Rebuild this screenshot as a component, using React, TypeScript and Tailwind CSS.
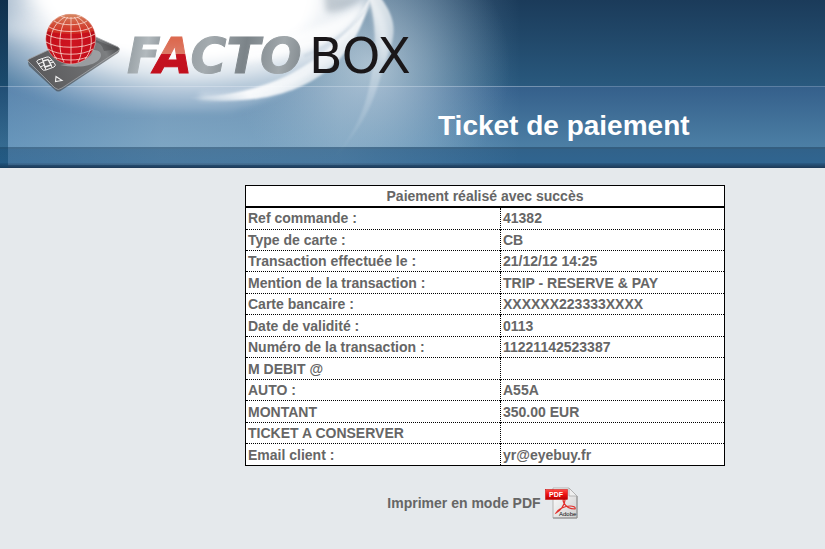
interface TicketRow {
  label: string;
  value: string;
}

const ticketRows: TicketRow[] = [
  { label: 'Ref commande :', value: '41382' },
  { label: 'Type de carte :', value: 'CB' },
  { label: 'Transaction effectuée le :', value: '21/12/12 14:25' },
  { label: 'Mention de la transaction :', value: 'TRIP - RESERVE & PAY' },
  { label: 'Carte bancaire :', value: 'XXXXXX223333XXXX' },
  { label: 'Date de validité :', value: '0113' },
  { label: 'Numéro de la transaction :', value: '11221142523387' },
  { label: 'M DEBIT @', value: '' },
  { label: 'AUTO :', value: 'A55A' },
  { label: 'MONTANT', value: '350.00 EUR' },
  { label: 'TICKET A CONSERVER', value: '' },
  { label: 'Email client :', value: 'yr@eyebuy.fr' }
];

function HeaderGlow() {
  return (
    <svg className="absolute top-0 left-0" width="560" height="168" viewBox="0 0 560 168" aria-hidden="true">
      <defs>
        <linearGradient id="veil" x1="8" x2="520" y1="0" y2="0" gradientUnits="userSpaceOnUse">
          <stop offset="0" stopColor="#86b0d4" stopOpacity="0.48" />
          <stop offset="0.3" stopColor="#a6c5dc" stopOpacity="0.55" />
          <stop offset="0.65" stopColor="#a6c5dc" stopOpacity="0.5" />
          <stop offset="0.82" stopColor="#a3c6e2" stopOpacity="0.28" />
          <stop offset="1" stopColor="#a3c6e2" stopOpacity="0" />
        </linearGradient>
        <radialGradient id="sky" gradientUnits="userSpaceOnUse" cx="0" cy="0" r="1" gradientTransform="translate(190 0) scale(260 122)">
          <stop offset="0" stopColor="#fff" />
          <stop offset="0.45" stopColor="#fff" />
          <stop offset="0.62" stopColor="#f6f8fb" stopOpacity="0.82" />
          <stop offset="0.82" stopColor="#dbe4ef" stopOpacity="0.42" />
          <stop offset="1" stopColor="#b5c9df" stopOpacity="0" />
        </radialGradient>
        <radialGradient id="halo" cx="372" cy="66" r="138" gradientUnits="userSpaceOnUse">
          <stop offset="0" stopColor="#e4edf3" stopOpacity="0.6" />
          <stop offset="0.4" stopColor="#c5d6e1" stopOpacity="0.4" />
          <stop offset="1" stopColor="#9fbdd0" stopOpacity="0" />
        </radialGradient>
        <linearGradient id="arc" x1="190" x2="385" y1="100" y2="0" gradientUnits="userSpaceOnUse">
          <stop offset="0" stopColor="#fff" stopOpacity="0" />
          <stop offset="0.25" stopColor="#fff" stopOpacity="0.9" />
          <stop offset="0.6" stopColor="#fff" stopOpacity="0.65" />
          <stop offset="1" stopColor="#fff" />
        </linearGradient>
        <linearGradient id="tail" x1="0" x2="0" y1="0" y2="158" gradientUnits="userSpaceOnUse">
          <stop offset="0" stopColor="#fff" stopOpacity="0.75" />
          <stop offset="0.35" stopColor="#eef4f8" stopOpacity="0.45" />
          <stop offset="0.7" stopColor="#eef4f8" stopOpacity="0.2" />
          <stop offset="1" stopColor="#eef4f8" stopOpacity="0" />
        </linearGradient>
        <linearGradient id="shade" x1="0" x2="0" y1="0" y2="168" gradientUnits="userSpaceOnUse">
          <stop offset="0" stopColor="#06253f" stopOpacity="0.5" />
          <stop offset="1" stopColor="#06456c" stopOpacity="0.3" />
        </linearGradient>
        <filter id="soft1" filterUnits="userSpaceOnUse" x="-60" y="-60" width="680" height="290">
          <feGaussianBlur stdDeviation="1" />
        </filter>
        <filter id="soft2" filterUnits="userSpaceOnUse" x="-60" y="-60" width="680" height="290">
          <feGaussianBlur stdDeviation="3" />
        </filter>
        <filter id="soft3" filterUnits="userSpaceOnUse" x="-60" y="-60" width="680" height="290">
          <feGaussianBlur stdDeviation="8" />
        </filter>
        <clipPath id="panel">
          <rect x="8" y="0" width="552" height="168" />
        </clipPath>
      </defs>

      <g clipPath="url(#panel)">
        <rect x="8" width="512" height="147" fill="url(#veil)" />
        <rect x="8" y="147" width="512" height="18" fill="url(#veil)" opacity="0.4" />
        <rect x="230" width="290" height="147" fill="url(#halo)" />

        {/* bright sky behind the logo */}
        <path d="M-40-40H378C366 30 320 88 230 112H-40Z" fill="url(#sky)" filter="url(#soft2)" />
        <path d="M45-40H300C318 10 300 40 260 44H110C60 40 30 20 25-40Z" fill="#fff" filter="url(#soft3)" />
        <ellipse cx="40" cy="28" rx="50" ry="9" fill="#fff" opacity="0.35" filter="url(#soft3)" />
        <path d="M324-8Q350 0 366-6Q346 14 326 12Z" fill="#6d7f8e" opacity="0.35" filter="url(#soft2)" />

        {/* light trails */}
        <path d="M190 97C260 97 330 68 371-4C350 84 280 108 190 99Z" fill="url(#arc)" filter="url(#soft1)" />
        <path d="M200 96C255 98 300 82 336 54" fill="none" stroke="#fff" strokeWidth="5" opacity="0.5" filter="url(#soft2)" />
        <path d="M240 42C300 36 346 20 372-4C352 40 310 56 240 62Z" fill="#fff" opacity="0.8" filter="url(#soft2)" />
        <path d="M371 2C356 26 334 44 304 56" fill="none" stroke="#b7c7d6" strokeWidth="3" opacity="0.35" filter="url(#soft1)" />
        <path d="M370-4C388 16 393 34 384 66C378 50 378 20 366-4Z" fill="#fff" opacity="0.5" filter="url(#soft2)" />
        <path d="M381-2C397 20 396 34 388 54C376 88 374 116 334 158C362 124 368 98 373 66C377 36 374 14 369-2Z" fill="url(#tail)" filter="url(#soft1)" />
      </g>
      <rect width="8" height="168" fill="url(#shade)" />
      <rect y="86" width="560" height="1" fill="#fff" opacity="0.15" />
    </svg>
  );
}

function Logo() {
  return (
    <svg className="relative block" width="400" height="88" viewBox="20 8 400 88" role="img" aria-label="FACTOBOX">
      <defs>
        <radialGradient id="globe" cx="0.5" cy="0.6" r="0.6">
          <stop offset="0" stopColor="#cf1420" />
          <stop offset="0.65" stopColor="#c60f1b" />
          <stop offset="1" stopColor="#a80d17" />
        </radialGradient>
        <linearGradient id="globeTop" x1="0" x2="0" y1="0" y2="1">
          <stop offset="0" stopColor="#d78a63" />
          <stop offset="1" stopColor="#d5301f" stopOpacity="0.7" />
        </linearGradient>
        <linearGradient id="card" x1="0" x2="1" y1="0.6" y2="0.3">
          <stop offset="0" stopColor="#59595b" />
          <stop offset="0.6" stopColor="#6c6d6f" />
          <stop offset="0.85" stopColor="#7d7f81" />
          <stop offset="1" stopColor="#4c4d4f" />
        </linearGradient>
        <linearGradient id="silver" x1="126" x2="306" y1="40" y2="73" gradientUnits="userSpaceOnUse">
          <stop offset="0" stopColor="#8f989d" />
          <stop offset="0.12" stopColor="#b2b9bd" />
          <stop offset="0.22" stopColor="#899196" />
          <stop offset="0.45" stopColor="#a4abaf" />
          <stop offset="0.65" stopColor="#7b8388" />
          <stop offset="0.85" stopColor="#a1a8ac" />
          <stop offset="1" stopColor="#7b8388" />
        </linearGradient>
        <linearGradient id="redLetter" x1="0" x2="0" y1="40" y2="73" gradientUnits="userSpaceOnUse">
          <stop offset="0" stopColor="#dc6a50" />
          <stop offset="0.42" stopColor="#dc7a66" />
          <stop offset="0.44" stopColor="#c51220" />
          <stop offset="1" stopColor="#c20f1d" />
        </linearGradient>
      </defs>

      {/* bank card */}
      <path d="M28 63L29 60L83 35Q86 34 89 36L118 48Q121 50 118 53L62 90Q58 93 55 90L29 66Z" fill="#3e3f41" opacity="0.6" />
      <path d="M28 61Q27 60 29 59L83 34Q86 33 89 34L118 47Q121 49 118 51L62 88Q58 91 55 88Z" fill="url(#card)" stroke="#a4a6a8" strokeWidth="0.8" />
      <path d="M60 65C84 70 101 63 101 55C101 51 97 50 93 50C92 58 82 63 60 65Z" fill="#a5a9ac" opacity="0.8" />
      <path d="M96 40L118 49L104 51Q102 43 95 42Z" fill="#494a4c" opacity="0.5" />
      <g fill="none" stroke="#f1f1f1" strokeWidth="1">
        <path d="M37 62Q36 61 38 60L47 57Q49 56.500 50 58L55 64Q56 66 54 67L46 70Q43 71 42 69Z" />
        <path d="M43 61L48 59.500L51 65L45 67Z" strokeWidth="1.400" />
        <path d="M38 64L43 62M40 67L45 65M42 58.500L43.500 61.500M49 61L52 60M50 63L54 62M45 67L46 70M51 65L52 67.500" />
        <path d="M56 76.500L62 80.500L55.500 81.500Z" strokeWidth="1.100" />
      </g>

      {/* globe */}
      <circle cx="70.700" cy="39" r="25" fill="url(#globe)" />
      <path d="M47 31C51 19 61 14 71 14C81 14 91 20 94 31C82 35 59 35 47 31Z" fill="url(#globeTop)" />
      <g fill="none" stroke="#fbd9cf" strokeWidth="0.800">
        <circle cx="70.700" cy="39" r="25" strokeOpacity="0.5" />
        <path d="M61 16C66 19 76 19 81 16" />
        <path d="M54 21C61 26 80 26 87 21" />
        <path d="M49 27C58 33 83 33 92 27" />
        <path d="M46 34C57 41 84 41 95 34" />
        <path d="M46 42C57 49 84 49 95 42" />
        <path d="M48 49C58 56 83 56 93 49" />
        <path d="M54 57C62 61 79 61 87 57" />
        <path d="M71 17V64" />
        <path d="M68 17C58 27 58 52 64 62" />
        <path d="M74 17C84 27 84 52 78 62" />
        <path d="M65 17C47 27 48 49 57 59" />
        <path d="M77 17C95 27 94 49 85 59" />
      </g>

      <text
        x="127"
        y="73"
        fontFamily="'DejaVu Sans', sans-serif"
        fontSize="49"
        fontWeight="700"
        fontStyle="italic"
        fill="url(#silver)"
        stroke="url(#silver)"
        strokeWidth="1"
      >
        F<tspan fill="url(#redLetter)" stroke="url(#redLetter)">A</tspan>CTO
      </text>
      <text x="309" y="73" fontFamily="'DejaVu Sans', sans-serif" fontSize="49" fontWeight="400" fill="#1a1719">
        BOX
      </text>
    </svg>
  );
}

function PdfIcon() {
  return (
    <svg width="34" height="32" viewBox="0 0 34 32" aria-hidden="true">
      <defs>
        <linearGradient id="sheet" x1="0" x2="1" y1="0" y2="1">
          <stop offset="0" stopColor="#fff" />
          <stop offset="1" stopColor="#cfcfcf" />
        </linearGradient>
        <linearGradient id="tag" x1="0" x2="0" y1="0" y2="1">
          <stop offset="0" stopColor="#ff4a42" />
          <stop offset="0.5" stopColor="#ee1111" />
          <stop offset="1" stopColor="#b80000" />
        </linearGradient>
      </defs>
      <path d="M8 1H24L32 9V31H8Z" fill="url(#sheet)" stroke="#b5b5b5" />
      <path d="M8 31H32V9" fill="none" stroke="#8c8c8c" />
      <path d="M24 1V9H32Z" fill="#eee" stroke="#aaa" strokeWidth="0.800" />
      <path d="M11 26C15 24 20 18 20 13C19 11 17 12 19 16C21 20 24 22 30 22C31 20 28 19 25 19C20 19 13 22 11 26Z" fill="none" stroke="#e2302c" strokeWidth="1.200" />
      <rect x="0.500" y="2.500" width="22" height="10" fill="url(#tag)" stroke="#c40000" strokeWidth="0.500" />
      <text x="4" y="10" fontFamily="'Liberation Sans', sans-serif" fontSize="7" fontWeight="700" fill="#fff">PDF</text>
      <text x="14" y="29" fontFamily="'Liberation Sans', sans-serif" fontSize="6" fontWeight="400" fill="#111">Adobe</text>
    </svg>
  );
}

export default function App() {
  return (
    <div className="min-h-screen bg-[#e5e9ec] font-['Liberation_Sans',Arial,sans-serif] text-sm font-bold text-[#666]">
      <header className="relative overflow-hidden">
        {/* bands of the banner */}
        <div className="absolute inset-0 flex flex-col">
          <div className="h-[86px] bg-linear-to-b from-[#1b3b5a] to-[#29597e]" />
          <div className="h-px bg-[#5c7fa3]" />
          <div className="h-[60px] bg-linear-to-b from-[#35608b] to-[#4c7fa5]" />
          <div className="h-0.5 bg-[#345e80]" />
          <div className="h-3.5 bg-linear-to-b from-[#31628a] to-[#306590]" />
          <div className="h-[5px] bg-linear-to-b from-[#2b5c85] to-[#1c3855]" />
        </div>
        <HeaderGlow />
        <div className="relative h-[168px] pt-2 pl-5">
          <Logo />
          <h1 className="pt-3 pl-[418px] text-[28px] leading-9 text-white">Ticket de paiement</h1>
        </div>
      </header>

      <main className="pt-[17px] pr-4 pb-7 pl-[245px]">
        <div className="max-w-[480px]">
          <table className="h-[281px] w-full border-collapse border border-black bg-white leading-4">
            <thead>
              <tr>
                <th colSpan={2} className="border-b-2 border-black p-0.5 text-center">
                  Paiement réalisé avec succès
                </th>
              </tr>
            </thead>
            <tbody>
              {ticketRows.map(row => (
                <tr key={row.label} className="border-b border-dotted border-black last:border-solid">
                  <th scope="row" className="w-[255px] border-r border-dotted border-black p-0.5 text-left">
                    {row.label}
                  </th>
                  <td className="p-0.5">{row.value}</td>
                </tr>
              ))}
            </tbody>
          </table>
          <a href="#pdf" className="mt-[21px] flex items-center justify-center gap-1 pr-1">
            Imprimer en mode PDF
            <PdfIcon />
          </a>
        </div>
      </main>
    </div>
  );
}
